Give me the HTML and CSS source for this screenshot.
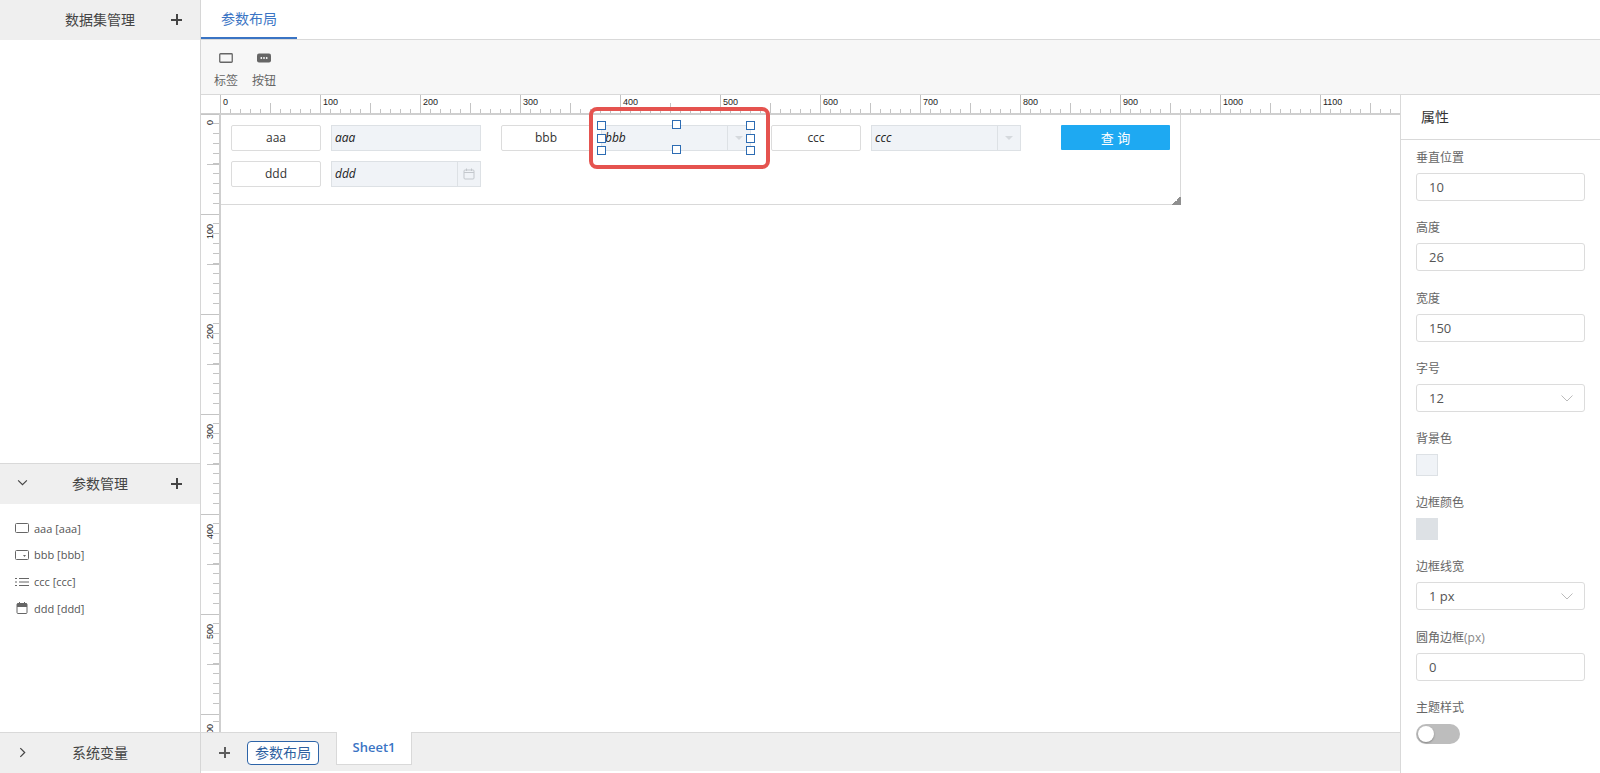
FILE: index.html
```html
<!DOCTYPE html>
<html lang="zh">
<head>
<meta charset="utf-8">
<title>参数布局</title>
<link rel="stylesheet" href="styles.css">
</head>
<body>
<div class="app">
  <aside class="side">
    <div class="side-head side-head-top"><span class="side-title">数据集管理</span><span class="plus"></span></div>
    <div class="side-fill"></div>
    <section class="params">
      <div class="side-head side-head-param">
        <svg class="chev" viewBox="0 0 12 8"><path d="M1 1.500 L6 6.500 L11 1.500"/></svg>
        <span class="side-title">参数管理</span><span class="plus"></span>
      </div>
      <ul class="param-list">
        <li><svg class="pi" viewBox="0 0 14 12"><rect x="0.500" y="1.500" width="13" height="9" rx="1"/></svg>aaa [aaa]</li>
        <li><svg class="pi" viewBox="0 0 14 12"><rect x="0.500" y="1.500" width="13" height="9" rx="1"/><path class="fill" d="M8 6h3l-1.500 2z"/></svg>bbb [bbb]</li>
        <li><svg class="pi" viewBox="0 0 14 12"><path d="M4 2.500h10M4 6h10M4 9.500h10M0 2.500h2M0 6h2M0 9.500h2"/></svg>ccc [ccc]</li>
        <li><svg class="pi" viewBox="0 0 14 12"><rect x="2" y="1.500" width="10" height="10" rx="1"/><path d="M2 4.500h10M4.500 0v2.500M9.500 0v2.500"/><path class="fill" d="M2 1.500h10v3H2z"/></svg>ddd [ddd]</li>
      </ul>
    </section>
    <div class="side-head side-head-sys">
      <svg class="chev-r" viewBox="0 0 8 12"><path d="M1.500 1 L6.500 6 L1.500 11"/></svg>
      <span class="side-title">系统变量</span>
    </div>
  </aside>

  <main class="main">
    <nav class="tabs"><a class="tab-active">参数布局</a></nav>
    <div class="toolbar">
      <div class="tool">
        <svg class="tool-ic" viewBox="0 0 14 10"><rect x="0.750" y="0.750" width="12.500" height="8.500" rx="0.800"/></svg>
        <span>标签</span>
      </div>
      <div class="tool">
        <svg class="tool-ic" viewBox="0 0 14 10"><rect class="solid" x="0" y="0.500" width="14" height="9" rx="2"/><circle class="dot" cx="4.300" cy="5" r="0.900"/><circle class="dot" cx="7" cy="5" r="0.900"/><circle class="dot" cx="9.700" cy="5" r="0.900"/></svg>
        <span>按钮</span>
      </div>
    </div>

    <div class="work">
      <div class="center">
        <div class="stage">
          <div class="ruler-h">
            <div class="rh-cell">0</div><div class="rh-cell">100</div><div class="rh-cell">200</div><div class="rh-cell">300</div><div class="rh-cell">400</div><div class="rh-cell">500</div><div class="rh-cell">600</div><div class="rh-cell">700</div><div class="rh-cell">800</div><div class="rh-cell">900</div><div class="rh-cell">1000</div><div class="rh-cell">1100</div>
          </div>
          <div class="stage-body">
            <div class="ruler-v">
              <div class="rv-cell rv-zero"><span>0</span></div><div class="rv-cell"><span>100</span></div><div class="rv-cell"><span>200</span></div><div class="rv-cell"><span>300</span></div><div class="rv-cell"><span>400</span></div><div class="rv-cell"><span>500</span></div><div class="rv-cell rv-last"><span>600</span></div>
            </div>
            <div class="canvas">
              <div class="form-box">
                <div class="form-row">
                  <div class="lbl">aaa</div>
                  <div class="inp inp-far"><i>aaa</i></div>
                  <div class="lbl">bbb</div>
                  <div class="inp inp-far selected"><i>bbb</i><span class="addon"><b class="tri"></b></span>
                    <div class="h h-tl"></div><div class="h h-tc"></div><div class="h h-tr"></div><div class="h h-ml"></div><div class="h h-mr"></div><div class="h h-bl"></div><div class="h h-bc"></div><div class="h h-br"></div>
                    <div class="mark"></div>
                  </div>
                  <div class="lbl">ccc</div>
                  <div class="inp inp-farther"><i>ccc</i><span class="addon"><b class="tri"></b></span></div>
                  <button class="query">查 询</button>
                </div>
                <div class="form-row">
                  <div class="lbl">ddd</div>
                  <div class="inp"><i>ddd</i><span class="addon"><svg class="cal" viewBox="0 0 12 12"><rect x="1" y="2" width="10" height="9" rx="1"/><path d="M1 4.500h10M3.500 0.500v2.500M8.500 0.500v2.500"/></svg></span></div>
                </div>
                <div class="grip"></div>
              </div>
            </div>
          </div>
        </div>
        <div class="sheetbar">
          <span class="plus sheet-plus"></span>
          <button class="sheet-btn">参数布局</button>
          <div class="sheet-tab">Sheet1</div>
        </div>
      </div>

      <aside class="props">
        <div class="props-head">属性</div>
        <div class="props-body">
          <label class="f-label">垂直位置</label>
          <div class="f-input">10</div>
          <label class="f-label">高度</label>
          <div class="f-input">26</div>
          <label class="f-label">宽度</label>
          <div class="f-input">150</div>
          <label class="f-label">字号</label>
          <div class="f-input">12<svg class="sel" viewBox="0 0 12 7"><path d="M0.500 0.500 L6 6 L11.500 0.500"/></svg></div>
          <label class="f-label">背景色</label>
          <div class="swatch swatch-bg"></div>
          <label class="f-label">边框颜色</label>
          <div class="swatch swatch-bd"></div>
          <label class="f-label">边框线宽</label>
          <div class="f-input">1 px<svg class="sel" viewBox="0 0 12 7"><path d="M0.500 0.500 L6 6 L11.500 0.500"/></svg></div>
          <label class="f-label">圆角边框<small>(px)</small></label>
          <div class="f-input">0</div>
          <label class="f-label">主题样式</label>
          <div class="toggle"><span class="knob"></span></div>
        </div>
      </aside>
    </div>
  </main>
</div>
</body>
</html>
```

FILE: styles.css
```css
* { box-sizing: border-box; }
html, body { margin: 0; padding: 0; height: 100%; overflow: hidden; }
body {
  font-family: "Open Sans", "Noto Sans CJK SC", sans-serif;
  font-size: 12px;
  color: #444;
  background: #fff;
}
.app { display: flex; height: 773px; }

/* left sidebar */
.side {
  width: 201px;
  flex: none;
  display: flex;
  flex-direction: column;
  border-right: 1px solid #d6d6d6;
}
.side-head {
  position: relative;
  display: flex;
  align-items: center;
  justify-content: center;
  background: #efefef;
  flex: none;
  padding-bottom: 1px;
}
.side-head-top { height: 40px; }
.side-head-param { height: 41px; border-top: 1px solid #d9d9d9; }
.side-head-sys { height: 41px; border-top: 1px solid #d9d9d9; }
.side-title { font-size: 14px; line-height: 20px; color: #444; }
.plus {
  position: absolute;
  right: 18px;
  top: 14px;
  width: 11px;
  height: 11px;
  background:
    linear-gradient(#444, #444) center / 100% 2px no-repeat,
    linear-gradient(#444, #444) center / 2px 100% no-repeat;
}
.chev { position: absolute; left: 17px; top: 15px; width: 11px; height: 7px; fill: none; stroke: #444; stroke-width: 1.300; }
.chev-r { position: absolute; left: 19px; top: 14px; width: 7px; height: 11px; fill: none; stroke: #444; stroke-width: 1.400; }
.side-fill { flex: 1; }
.params { height: 269px; flex: none; }
.param-list { list-style: none; margin: 0; padding: 11px 0 0 15px; }
.param-list li {
  display: flex;
  align-items: center;
  height: 26.670px;
  font-size: 11px;
  color: #555;
}
.pi { width: 14px; height: 12px; margin-right: 5px; fill: none; stroke: #666; stroke-width: 1; flex: none; }
.pi .fill { fill: #666; stroke: none; }

/* main */
.main { flex: 1; min-width: 0; display: flex; flex-direction: column; }
.tabs { height: 40px; flex: none; border-bottom: 1px solid #d9d9d9; display: flex; }
.tab-active {
  width: 96px;
  height: 39px;
  text-align: center;
  line-height: 38px;
  font-size: 14px;
  color: #3a74c4;
  border-bottom: 2px solid #3a74c4;
}
.toolbar {
  height: 55px;
  flex: none;
  background: #f7f7f7;
  border-bottom: 1px solid #d9d9d9;
  display: flex;
  padding: 13px 0 0 13px;
  gap: 14px;
}
.tool { display: flex; flex-direction: column; align-items: center; width: 24px; color: #666; font-size: 12px; line-height: 17px; }
.tool-ic { width: 14px; height: 10px; margin-bottom: 9px; fill: none; stroke: #666; stroke-width: 1.300; flex: none; }
.tool-ic .solid { fill: #666; stroke: none; }
.tool-ic .dot { fill: #fff; stroke: none; }

.work { flex: 1; min-height: 0; display: flex; }
.center { flex: 1; min-width: 0; display: flex; flex-direction: column; }
.stage { flex: 1; min-height: 0; display: flex; flex-direction: column; overflow: hidden; }

/* rulers */
.ruler-h {
  height: 20px;
  flex: none;
  display: flex;
  padding-left: 19px;
  overflow: hidden;
  border-bottom: 2px solid #cfcfcf;
}
.rh-cell {
  width: 100px;
  flex: none;
  height: 18px;
  padding: 0 0 0 2px;
  font: 9px/15px "Liberation Sans", sans-serif;
  color: #222;
  border-left: 1px solid #c4c4c4;
  background-image:
    linear-gradient(#c4c4c4, #c4c4c4),
    repeating-linear-gradient(90deg, transparent 0 9px, #c4c4c4 9px 10px);
  background-size: 1px 10px, 100% 4px;
  background-position: 49px 8px, 0 14px;
  background-repeat: no-repeat;
}
.stage-body { flex: 1; min-height: 0; display: flex; }
.ruler-v {
  width: 20px;
  flex: none;
  overflow: hidden;
  margin-top: -1px;
  border-right: 2px solid #cfcfcf;
}
.rv-cell {
  height: 100px;
  position: relative;
  border-top: 1px solid #c4c4c4;
  background-image:
    linear-gradient(#c4c4c4, #c4c4c4),
    repeating-linear-gradient(0deg, transparent 0 9px, #c4c4c4 9px 10px);
  background-size: 12px 1px, 6px 100%;
  background-position: 6px 49px, 12px -1px;
  background-repeat: no-repeat;
}
.rv-cell span {
  position: absolute;
  left: 4px;
  top: 9px;
  writing-mode: vertical-rl;
  transform: rotate(180deg);
  font: 9px/10px "Liberation Sans", sans-serif;
  color: #222;
}
.rv-zero span { top: 5px; }
/* the last label runs under the bottom bar, as in the reference */
.rv-last { height: 18px; overflow: hidden; }

/* canvas */
.canvas { flex: 1; min-width: 0; position: relative; }
.form-box {
  position: relative;
  width: 960px;
  height: 90px;
  border-right: 1px solid #d9d9d9;
  border-bottom: 1px solid #d9d9d9;
  padding: 10px 0 0 10px;
}
.form-row { display: flex; gap: 10px; margin-bottom: 10px; }
.lbl {
  width: 90px;
  height: 26px;
  flex: none;
  border: 1px solid #dcdcdc;
  border-radius: 2px;
  background: #fff;
  color: #333;
  text-align: center;
  line-height: 23px;
  font-size: 12px;
}
.inp {
  position: relative;
  width: 150px;
  height: 26px;
  flex: none;
  background: #f0f3f7;
  border: 1px solid #dde1e5;
  color: #222;
  font-size: 12px;
  line-height: 24px;
  padding-left: 3px;
  display: flex;
  justify-content: space-between;
}
.inp-far { margin-right: 10px; }
.inp-farther { margin-right: 30px; }
.addon {
  width: 23px;
  border-left: 1px solid #dde1e5;
  display: flex;
  align-items: center;
  justify-content: center;
  flex: none;
}
.tri { width: 0; height: 0; border: 4px solid transparent; border-top: 4px solid #d5d9dd; border-bottom: 0; }
.cal { width: 12px; height: 12px; fill: none; stroke: #c3c7cc; stroke-width: 1; }
.query {
  width: 109px;
  height: 25px;
  flex: none;
  border: 0;
  border-radius: 1px;
  background: #1ea9f2;
  color: #fff;
  font: 13px "Open Sans", "Noto Sans CJK SC", sans-serif;
  padding: 0;
}
.grip {
  position: absolute;
  right: -1px;
  bottom: -1px;
  width: 9px;
  height: 9px;
  background: linear-gradient(135deg, transparent 50%, #8f8f8f 50%);
}

/* selection handles over the selected field */
.h { position: absolute; width: 9px; height: 9px; background: #fff; border: 1px solid #2d6cb3; z-index: 2; }
.h-tl { left: -5px; top: -5px; }
.h-tc { left: 70px; top: -6px; }
.h-tr { left: 144px; top: -5px; }
.h-ml { left: -5px; top: 8px; }
.h-mr { left: 144px; top: 8px; }
.h-bl { left: -5px; top: 20px; }
.h-bc { left: 70px; top: 19px; }
.h-br { left: 144px; top: 20px; }
.mark {
  position: absolute;
  left: -13px;
  top: -19px;
  width: 181px;
  height: 62px;
  border: 4px solid #e5534f;
  border-radius: 8px;
  z-index: 3;
}

/* sheet bar */
.sheetbar {
  height: 41px;
  flex: none;
  display: flex;
  align-items: flex-start;
  background: linear-gradient(#efefef 0 38px, #fff 38px);
  border-top: 1px solid #d9d9d9;
  position: relative;
}
.sheet-plus { position: static; margin: 14px 0 0 18px; flex: none; opacity: .85; }
.sheet-btn {
  margin: 8px 0 0 17px;
  width: 72px;
  height: 24px;
  padding: 0;
  border: 1px solid #2d64a8;
  border-radius: 4px;
  background: #fff;
  color: #2d5f9f;
  font: 14px "Open Sans", "Noto Sans CJK SC", sans-serif;
  line-height: 20px;
}
.sheet-tab {
  margin: -1px 0 0 17px;
  width: 76px;
  height: 33px;
  background: #fff;
  border: 1px solid #d9d9d9;
  border-top: 0;
  text-align: center;
  color: #3a74c4;
  font-size: 13px;
  font-weight: 600;
  line-height: 30px;
}

/* properties */
.props { width: 200px; flex: none; border-left: 1px solid #d9d9d9; background: #fff; }
.props-head { height: 45px; border-bottom: 1px solid #d9d9d9; padding-left: 20px; line-height: 43px; font-size: 14px; color: #333; }
.props-body { padding: 8px 15px 0 15px; }
.f-label { display: block; height: 20px; margin-bottom: 5px; line-height: 20px; font-size: 12px; color: #666; }
.f-label small { font-size: 12px; color: #888; }
.f-input {
  position: relative;
  height: 28px;
  margin-bottom: 17.330px;
  padding-left: 12px;
  border: 1px solid #dcdcdc;
  border-radius: 3px;
  font-size: 13px;
  line-height: 26px;
  color: #555;
}
.sel { position: absolute; right: 11px; top: 10px; width: 12px; height: 7px; fill: none; stroke: #bbb; stroke-width: 1; }
.swatch { width: 22px; height: 22px; margin-bottom: 17px; }
.swatch-bg { background: #f0f3f7; border: 1px solid #dde1e5; }
.swatch-bd { background: #dde1e5; }
.toggle { position: relative; width: 44px; height: 20px; border-radius: 10px; background: #bdbdbd; margin-top: 6px; }
.knob { position: absolute; left: 2px; top: 2px; width: 16px; height: 16px; border-radius: 50%; background: #fff; box-shadow: 0 1px 2px rgba(0,0,0,.3); }
```
